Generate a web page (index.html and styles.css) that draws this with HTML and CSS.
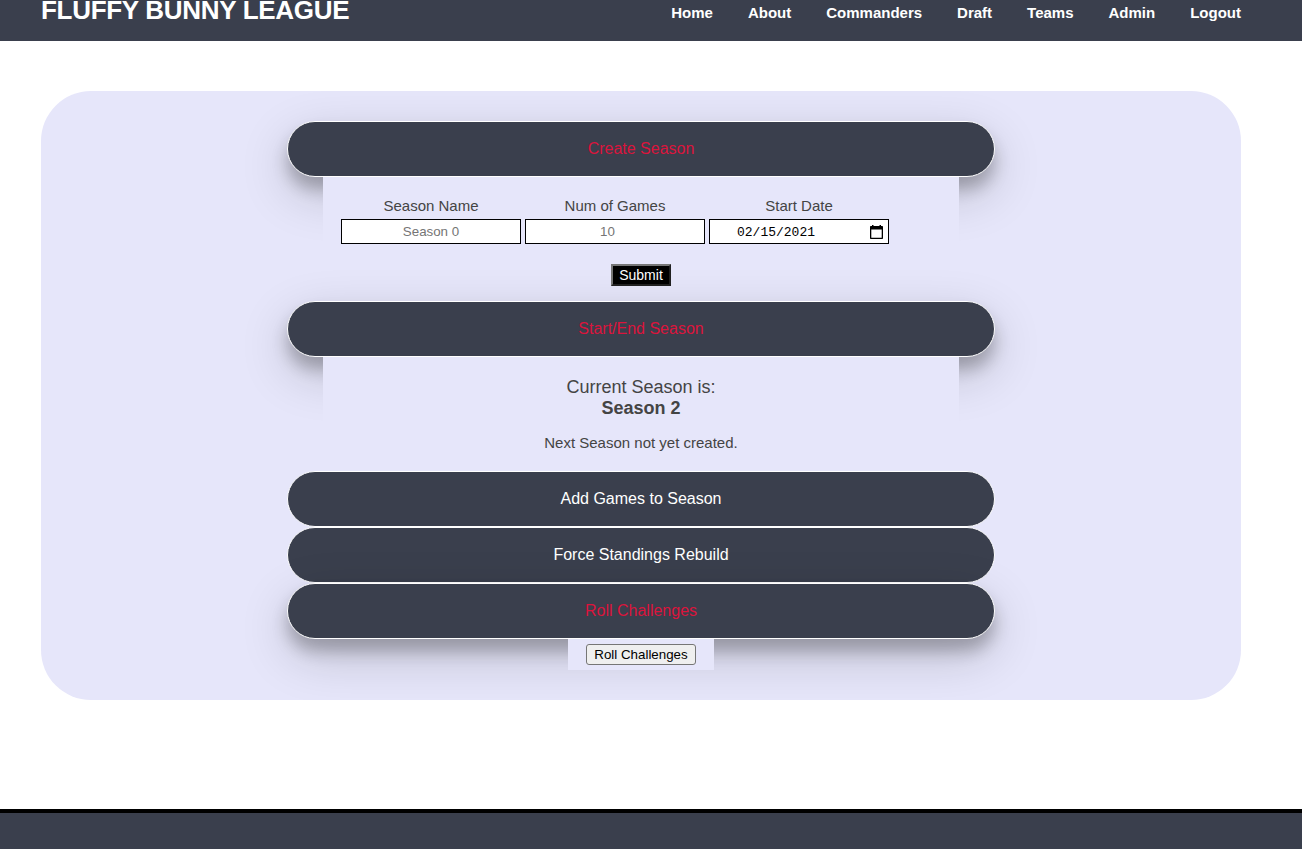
FILE: index.html
```html
<!DOCTYPE html>
<html lang="en">
<head>
<meta charset="utf-8">
<title>Fluffy Bunny League</title>
<link rel="stylesheet" href="styles.css">
</head>
<body>
<header class="site-header">
  <h1 class="brand">FLUFFY BUNNY LEAGUE</h1>
  <nav class="nav">
    <a>Home</a><a>About</a><a>Commanders</a><a>Draft</a><a>Teams</a><a>Admin</a><a>Logout</a>
  </nav>
</header>
<main class="card">
  <div class="bar active">Create Season</div>
  <section class="panel create">
    <div class="fields">
      <label class="field">Season Name<input class="input" type="text" placeholder="Season 0"></label>
      <label class="field">Num of Games<input class="input number" type="text" placeholder="10"></label>
      <div class="field">Start Date
        <div class="input date"><span class="date-text">02/15/2021</span>
          <svg class="cal" width="13" height="14" viewBox="0 0 13 14"><path d="M2 0h1.5v1h6V0H11v1h1.2q.8 0 .8.8v11.4q0 .8-.8.8H.8q-.8 0-.8-.8V1.8Q0 1 .8 1H2zM1.3 4.4v8.3h10.4V4.4z" fill="#000" fill-rule="evenodd"/></svg>
        </div>
      </div>
    </div>
    <button class="submit">Submit</button>
  </section>
  <div class="bar active">Start/End Season</div>
  <section class="panel current">
    <p class="season">Current Season is:<br><b>Season 2</b></p>
    <p class="note">Next Season not yet created.</p>
  </section>
  <div class="bar">Add Games to Season</div>
  <div class="bar">Force Standings Rebuild</div>
  <div class="bar active">Roll Challenges</div>
  <section class="panel roll"><button class="roll-button">Roll Challenges</button></section>
</main>
<footer class="site-footer"></footer>
</body>
</html>
```
FILE: styles.css
```css
* { box-sizing: border-box; }
body {
  margin: 0;
  height: 849px;
  overflow: hidden;
  display: flex;
  flex-direction: column;
  background: #fff;
  color: #444;
  font: 15px/17px "Liberation Sans", Arial, sans-serif;
}
.site-header {
  flex: none;
  height: 41px;
  padding: 0 61px 0 41px;
  display: flex;
  justify-content: space-between;
  background: #3a3f4d;
  color: #fff;
}
.brand {
  height: 20px;
  margin: 0;
  font-size: 26px;
  line-height: 20px;
  letter-spacing: -.3px;
  white-space: nowrap;
}
.nav { display: flex; gap: 35px; padding-top: 4px; font-weight: bold; }
.card {
  flex: none;
  width: 1200px;
  height: 609px;
  margin: 50px 0 0 41px;
  padding: 30px 0;
  display: flex;
  flex-direction: column;
  align-items: center;
  background: #e6e6fa;
  border-radius: 50px;
  overflow: hidden;
}
.bar {
  flex: none;
  width: 708px;
  height: 56px;
  border: 1px solid #fff;
  border-radius: 30px;
  background: #3a3f4d;
  color: #fff;
  font-size: 16px;
  line-height: 54px;
  text-align: center;
}
.active {
  color: crimson;
  box-shadow: 0 12px 16px 0 rgba(0, 0, 0, .24), 0 17px 50px 0 rgba(0, 0, 0, .19);
}
.panel { flex: none; width: 636px; padding: 0 18px; background: #e6e6fa; text-align: center; }
.create { height: 124px; padding-top: 20px; }
.fields { display: flex; gap: 4px; margin-bottom: 20px; }
.field { width: 180px; display: flex; flex-direction: column; gap: 5px; }
.input {
  width: 180px;
  height: 25px;
  padding: 1px 2px;
  border: 1px solid #000;
  border-radius: 0;
  background: #fff;
  font: 13.333px "Liberation Sans", Arial, sans-serif;
  text-align: center;
}
.input::placeholder { color: #757575; }
.number { padding-right: 17px; }
.date {
  display: flex;
  justify-content: space-between;
  align-items: center;
  padding: 0 5px 0 27px;
  color: #000;
  font: 13px "Liberation Mono", monospace;
}
.date-text { padding-top: 2px; }
.submit {
  display: block;
  width: 60px;
  height: 22px;
  margin: 0 auto;
  padding: 0;
  border: 2px outset #767676;
  background: #000;
  color: #fff;
  font: 14px/16px "Liberation Sans", Arial, sans-serif;
}
.current { height: 114px; padding-top: 20px; }
.season { margin: 0; font-size: 18px; line-height: 21px; }
.note { margin: 15px 0 0; }
.roll { width: 146px; height: 31px; padding-top: 5px; }
.roll-button {
  display: block;
  width: 110px;
  height: 21px;
  padding: 0;
  border: 1px solid #767676;
  border-radius: 3px;
  background: #efefef;
  color: #000;
  font: 13.333px "Liberation Sans", Arial, sans-serif;
}
.site-footer { flex: 1; margin-top: 109px; border-top: 4px solid #000; background: #3a3f4d; }
```
